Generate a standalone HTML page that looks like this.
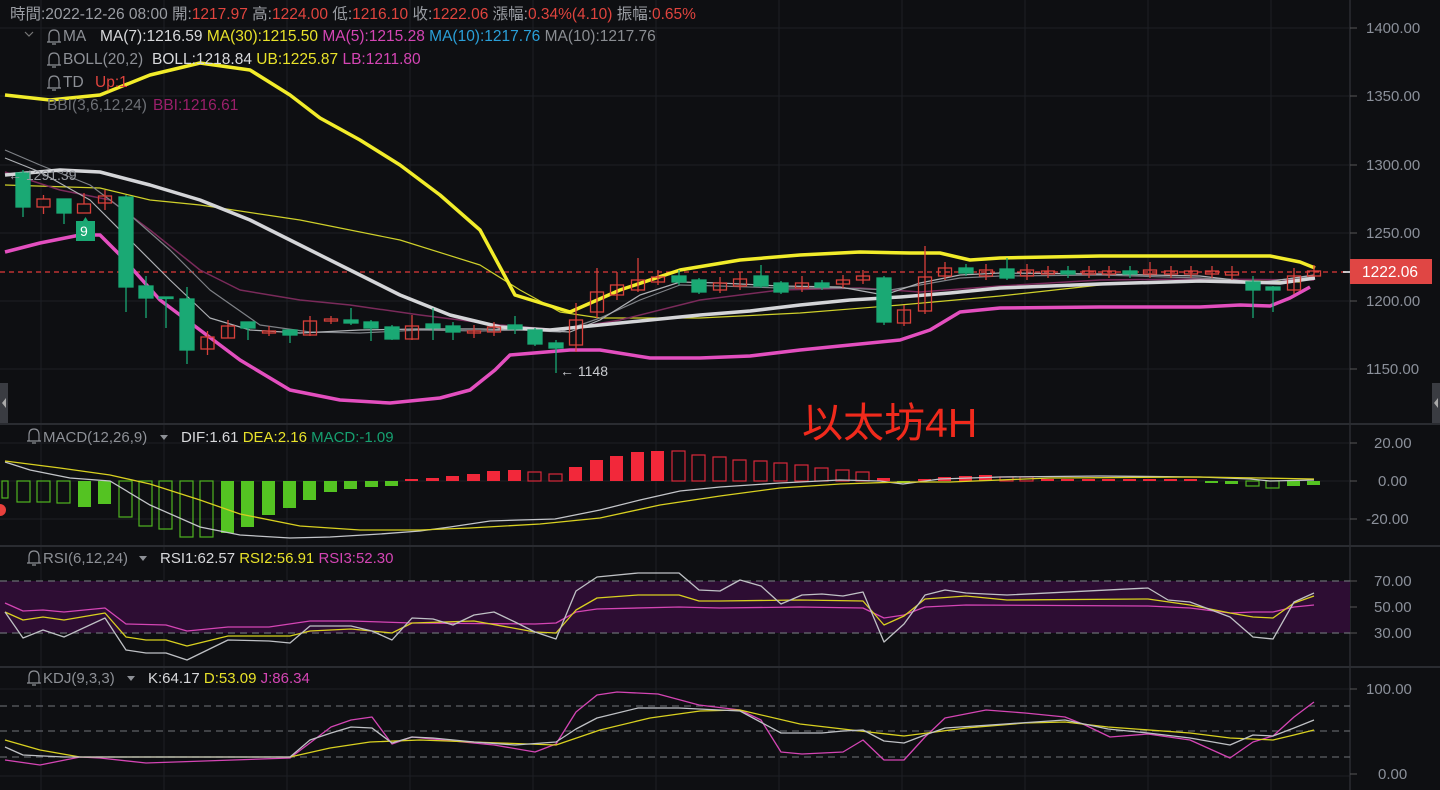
<!DOCTYPE html>
<html><head><meta charset="utf-8">
<style>
html,body{margin:0;padding:0;background:#0e0f12;width:1440px;height:790px;overflow:hidden}
svg{display:block}
text{font-family:"Liberation Sans","Noto Sans CJK TC",sans-serif}
</style></head><body>
<svg width="1440" height="790" viewBox="0 0 1440 790" xmlns="http://www.w3.org/2000/svg">
<rect width="1440" height="790" fill="#0e0f12"/>
<g stroke="#1d1f24" stroke-width="1">
<line x1="41" y1="0" x2="41" y2="790"/><line x1="164" y1="0" x2="164" y2="790"/><line x1="287" y1="0" x2="287" y2="790"/><line x1="410" y1="0" x2="410" y2="790"/><line x1="533" y1="0" x2="533" y2="790"/><line x1="656" y1="0" x2="656" y2="790"/><line x1="779" y1="0" x2="779" y2="790"/><line x1="902" y1="0" x2="902" y2="790"/><line x1="1025" y1="0" x2="1025" y2="790"/><line x1="1148" y1="0" x2="1148" y2="790"/><line x1="1271" y1="0" x2="1271" y2="790"/>
<line x1="0" y1="28" x2="1350" y2="28"/><line x1="0" y1="96" x2="1350" y2="96"/><line x1="0" y1="165" x2="1350" y2="165"/><line x1="0" y1="233" x2="1350" y2="233"/><line x1="0" y1="301" x2="1350" y2="301"/><line x1="0" y1="369" x2="1350" y2="369"/>
<line x1="0" y1="443" x2="1350" y2="443"/><line x1="0" y1="481" x2="1350" y2="481"/><line x1="0" y1="519" x2="1350" y2="519"/>
<line x1="0" y1="689" x2="1350" y2="689"/><line x1="0" y1="776" x2="1350" y2="776"/>
</g>
<g stroke="#2a2c31" stroke-width="2">
<line x1="0" y1="424" x2="1440" y2="424"/><line x1="0" y1="546" x2="1440" y2="546"/><line x1="0" y1="667" x2="1440" y2="667"/>
</g>
<line x1="1350" y1="0" x2="1350" y2="790" stroke="#2a2c31" stroke-width="1.5"/>
<g stroke="#555" stroke-width="1">
<line x1="1350" y1="28" x2="1357" y2="28"/><line x1="1350" y1="96" x2="1357" y2="96"/><line x1="1350" y1="165" x2="1357" y2="165"/><line x1="1350" y1="233" x2="1357" y2="233"/><line x1="1350" y1="301" x2="1357" y2="301"/><line x1="1350" y1="369" x2="1357" y2="369"/>
<line x1="1350" y1="443" x2="1357" y2="443"/><line x1="1350" y1="481" x2="1357" y2="481"/><line x1="1350" y1="519" x2="1357" y2="519"/>
<line x1="1350" y1="581" x2="1357" y2="581"/><line x1="1350" y1="607" x2="1357" y2="607"/><line x1="1350" y1="633" x2="1357" y2="633"/>
<line x1="1350" y1="689" x2="1357" y2="689"/><line x1="1350" y1="774" x2="1357" y2="774"/>
</g>
<g fill="#8b909a" font-size="15">
<text x="1366" y="33">1400.00</text><text x="1366" y="101">1350.00</text><text x="1366" y="170">1300.00</text><text x="1366" y="238">1250.00</text><text x="1366" y="306">1200.00</text><text x="1366" y="374">1150.00</text>
<text x="1374" y="448">20.00</text><text x="1378" y="486">0.00</text><text x="1366" y="524">-20.00</text>
<text x="1374" y="586">70.00</text><text x="1374" y="612">50.00</text><text x="1374" y="638">30.00</text>
<text x="1366" y="694">100.00</text><text x="1378" y="779">0.00</text>
</g>
<rect x="1350" y="259" width="82" height="25" fill="#e04644"/>
<text x="1362" y="277" fill="#fff" font-size="15.5">1222.06</text>
<line x1="0" y1="272" x2="1350" y2="272" stroke="#e0393a" stroke-width="1.2" stroke-dasharray="5,4"/>
<line x1="1343" y1="272" x2="1350" y2="272" stroke="#fff" stroke-width="1.5"/>
<rect x="0" y="383" width="8" height="40" fill="#3a3c42"/><rect x="1432" y="383" width="8" height="40" fill="#3a3c42"/>
<path d="M6 398 L2 403 L6 408Z" fill="#aaa"/><path d="M1438 398 L1434 403 L1438 408Z" fill="#aaa"/>
<circle cx="0" cy="510" r="6" fill="#e8403c"/>

<g fill="none" stroke-linejoin="round">
<polyline stroke="#cfd02a" stroke-width="1.2" points="5,185 100,188 150,200 200,205 300,220 400,240 480,265 520,290 560,312 600,318 700,318 800,313 900,305 1000,296 1100,285 1200,280 1300,282"/>
<polyline stroke="#7a2a5a" stroke-width="1.5" points="5,172 60,190 110,200 150,230 200,270 240,290 300,300 350,305 420,315 500,325 560,330 620,320 700,300 780,290 860,288 920,292 1000,286 1100,280 1200,279 1314,280"/>
<polyline stroke="#7e8186" stroke-width="1.2" points="5,150 40,165 90,185 130,215 170,250 210,290 260,325 310,332 360,333 420,330 480,331 520,330 560,332 600,318 640,300 680,285 720,286 780,288 840,288 890,290 920,285 960,278 1000,276 1100,275 1200,278 1260,282 1314,276"/>
<polyline stroke="#aeb0b4" stroke-width="1.2" points="5,158 40,172 90,200 130,240 170,280 210,318 250,330 300,333 360,330 420,329 480,329 530,330 570,332 600,320 640,295 680,282 720,283 780,286 840,287 884,295 920,283 960,275 1000,273 1100,274 1200,276 1260,283 1314,275"/>
<polyline stroke="#d4d5d8" stroke-width="3.5" points="5,175 60,170 100,172 150,185 200,200 250,220 300,245 350,270 400,295 450,315 500,327 550,330 600,325 650,320 700,315 750,311 800,305 850,300 900,297 950,293 1000,288 1100,284 1200,281 1280,283 1315,278"/>
<polyline stroke="#f2ec2a" stroke-width="3.5" points="5,95 50,100 100,95 150,75 200,63 250,70 290,95 320,118 360,140 400,165 440,195 480,230 515,295 570,312 620,290 680,270 740,260 800,255 860,252 910,253 940,253 970,260 1000,258 1100,256 1270,256 1300,262 1315,268"/>
<polyline stroke="#e34fbf" stroke-width="3.5" points="5,252 40,243 80,235 100,235 120,255 160,300 200,330 240,360 290,390 340,400 390,403 440,398 470,390 495,370 510,355 570,350 600,350 650,358 700,358 750,356 800,350 850,345 900,340 930,330 960,312 1000,308 1100,307 1200,307 1240,305 1270,306 1290,298 1310,287"/>
</g>

<g stroke-width="1.3">
<g stroke="#1aa974" fill="#1aa974">
<line x1="23" y1="170" x2="23" y2="217"/><rect x="16" y="173" width="14" height="34"/>
<line x1="64" y1="199" x2="64" y2="224"/><rect x="57" y="199" width="14" height="14"/>
<line x1="126" y1="195" x2="126" y2="312"/><rect x="119" y="197" width="14" height="90"/>
<line x1="146" y1="276" x2="146" y2="318"/><rect x="139" y="286" width="14" height="12"/>
<line x1="166" y1="297" x2="166" y2="328"/><rect x="159" y="297" width="14" height="1.5"/>
<line x1="187" y1="287" x2="187" y2="364"/><rect x="180" y="299" width="14" height="51"/>
<line x1="248" y1="322" x2="248" y2="340"/><rect x="241" y="322" width="14" height="6"/>
<line x1="290" y1="330" x2="290" y2="343"/><rect x="283" y="330" width="14" height="5"/>
<line x1="351" y1="308" x2="351" y2="325"/><rect x="344" y="320" width="14" height="3"/>
<line x1="371" y1="320" x2="371" y2="341"/><rect x="364" y="322" width="14" height="6"/>
<line x1="392" y1="325" x2="392" y2="340"/><rect x="385" y="327" width="14" height="12"/>
<line x1="433" y1="308" x2="433" y2="340"/><rect x="426" y="324" width="14" height="4"/>
<line x1="453" y1="322" x2="453" y2="340"/><rect x="446" y="326" width="14" height="6"/>
<line x1="515" y1="316" x2="515" y2="334"/><rect x="508" y="325" width="14" height="4"/>
<line x1="535" y1="328" x2="535" y2="346"/><rect x="528" y="330" width="14" height="14"/>
<line x1="556" y1="340" x2="556" y2="373"/><rect x="549" y="343" width="14" height="5"/>
<line x1="679" y1="270" x2="679" y2="285"/><rect x="672" y="276" width="14" height="6"/>
<line x1="699" y1="278" x2="699" y2="294"/><rect x="692" y="280" width="14" height="12"/>
<line x1="761" y1="265" x2="761" y2="288"/><rect x="754" y="276" width="14" height="10"/>
<line x1="781" y1="281" x2="781" y2="294"/><rect x="774" y="283" width="14" height="9"/>
<line x1="822" y1="280" x2="822" y2="290"/><rect x="815" y="283" width="14" height="4"/>
<line x1="884" y1="276" x2="884" y2="325"/><rect x="877" y="278" width="14" height="44"/>
<line x1="966" y1="264" x2="966" y2="276"/><rect x="959" y="268" width="14" height="5"/>
<line x1="1007" y1="258" x2="1007" y2="280"/><rect x="1000" y="269" width="14" height="9"/>
<line x1="1068" y1="266" x2="1068" y2="278"/><rect x="1061" y="271" width="14" height="3"/>
<line x1="1130" y1="266" x2="1130" y2="278"/><rect x="1123" y="271" width="14" height="3"/>
<line x1="1253" y1="276" x2="1253" y2="318"/><rect x="1246" y="282" width="14" height="8"/>
<line x1="1273" y1="286" x2="1273" y2="312"/><rect x="1266" y="287" width="14" height="3"/>
</g>
<g stroke="#d8403a" fill="none">
<line x1="43.5" y1="195" x2="43.5" y2="199"/><line x1="43.5" y1="207" x2="43.5" y2="214"/><rect x="37" y="199" width="13" height="8"/>
<line x1="84" y1="193" x2="84" y2="204"/><rect x="77.5" y="204" width="13" height="9"/>
<line x1="105" y1="190" x2="105" y2="210"/><rect x="98.5" y="196" width="13" height="7"/>
<line x1="207.5" y1="331" x2="207.5" y2="355"/><rect x="201" y="337" width="13" height="12"/>
<line x1="228" y1="320" x2="228" y2="338"/><rect x="221.5" y="326" width="13" height="12"/>
<line x1="269" y1="326" x2="269" y2="336"/><rect x="262.5" y="331" width="13" height="2"/>
<line x1="310" y1="316" x2="310" y2="336"/><rect x="303.5" y="321" width="13" height="14"/>
<line x1="331" y1="316" x2="331" y2="324"/><rect x="324.5" y="319" width="13" height="2"/>
<line x1="412" y1="315" x2="412" y2="340"/><rect x="405.5" y="326" width="13" height="13"/>
<line x1="474" y1="325" x2="474" y2="338"/><rect x="467.5" y="331" width="13" height="2"/>
<line x1="494" y1="322" x2="494" y2="336"/><rect x="487.5" y="327" width="13" height="5"/>
<line x1="576" y1="303" x2="576" y2="352"/><rect x="569.5" y="320" width="13" height="25"/>
<line x1="597" y1="268" x2="597" y2="318"/><rect x="590.5" y="292" width="13" height="20"/>
<line x1="617" y1="272" x2="617" y2="300"/><rect x="610.5" y="285" width="13" height="10"/>
<line x1="638" y1="258" x2="638" y2="292"/><rect x="631.5" y="280" width="13" height="10"/>
<line x1="658" y1="270" x2="658" y2="285"/><rect x="651.5" y="277" width="13" height="5"/>
<line x1="720" y1="277" x2="720" y2="293"/><rect x="713.5" y="283" width="13" height="7"/>
<line x1="740" y1="272" x2="740" y2="290"/><rect x="733.5" y="279" width="13" height="7"/>
<line x1="802" y1="276" x2="802" y2="292"/><rect x="795.5" y="283" width="13" height="5"/>
<line x1="843" y1="275" x2="843" y2="288"/><rect x="836.5" y="280" width="13" height="4"/>
<line x1="863" y1="270" x2="863" y2="284"/><rect x="856.5" y="276" width="13" height="4"/>
<line x1="904" y1="305" x2="904" y2="326"/><rect x="897.5" y="310" width="13" height="13"/>
<line x1="925" y1="246" x2="925" y2="314"/><rect x="918.5" y="277" width="13" height="34"/>
<line x1="945" y1="262" x2="945" y2="280"/><rect x="938.5" y="268" width="13" height="8"/>
<line x1="986" y1="264" x2="986" y2="280"/><rect x="979.5" y="270" width="13" height="6"/>
<line x1="1027" y1="264" x2="1027" y2="280"/><rect x="1020.5" y="270" width="13" height="6"/>
<line x1="1048" y1="266" x2="1048" y2="278"/><rect x="1041.5" y="271" width="13" height="3"/>
<line x1="1089" y1="266" x2="1089" y2="278"/><rect x="1082.5" y="271" width="13" height="3"/>
<line x1="1109" y1="266" x2="1109" y2="278"/><rect x="1102.5" y="271" width="13" height="3"/>
<line x1="1150" y1="262" x2="1150" y2="278"/><rect x="1143.5" y="270" width="13" height="4"/>
<line x1="1171" y1="266" x2="1171" y2="278"/><rect x="1164.5" y="271" width="13" height="3"/>
<line x1="1191" y1="266" x2="1191" y2="278"/><rect x="1184.5" y="271" width="13" height="3"/>
<line x1="1212" y1="266" x2="1212" y2="278"/><rect x="1205.5" y="271" width="13" height="3"/>
<line x1="1232" y1="266" x2="1232" y2="280"/><rect x="1225.5" y="272" width="13" height="3"/>
<line x1="1294" y1="268" x2="1294" y2="294"/><rect x="1287.5" y="276" width="13" height="14"/>
<line x1="1314" y1="265" x2="1314" y2="276"/><rect x="1307.5" y="271" width="13" height="5"/>
</g>
</g>
<rect x="76" y="221" width="19" height="20" fill="#1aa974"/>
<path d="M83 221 L85.5 217 L88 221Z" fill="#1aa974"/>
<text x="80" y="236" fill="#fff" font-size="14">9</text>
<text x="8" y="180" fill="#9a9da3" font-size="14">← 1291.39</text>
<text x="560" y="376" fill="#c9cbcf" font-size="14">← 1148</text>
<text x="802" y="437" fill="#f02a1c" font-size="41" font-family="'Liberation Sans','Noto Sans CJK SC',sans-serif">以太坊4H</text>

<g font-size="15.5">
<text x="10" y="19"><tspan fill="#9a9da3">時間:2022-12-26 08:00 </tspan><tspan fill="#9a9da3">開:</tspan><tspan fill="#e0443e">1217.97 </tspan><tspan fill="#9a9da3">高:</tspan><tspan fill="#e0443e">1224.00 </tspan><tspan fill="#9a9da3">低:</tspan><tspan fill="#e0443e">1216.10 </tspan><tspan fill="#9a9da3">收:</tspan><tspan fill="#e0443e">1222.06 </tspan><tspan fill="#9a9da3">漲幅:</tspan><tspan fill="#e0443e">0.34%(4.10) </tspan><tspan fill="#9a9da3">振幅:</tspan><tspan fill="#e0443e">0.65%</tspan></text>
<path d="M25 32 L29 36 L33 32" stroke="#777" fill="none" stroke-width="1.2"/>
<text x="63" y="41" fill="#8d9096">MA</text>
<text x="100" y="41"><tspan fill="#d8d9dc">MA(7):1216.59 </tspan><tspan fill="#e8e22a">MA(30):1215.50 </tspan><tspan fill="#d445b4">MA(5):1215.28 </tspan><tspan fill="#2a9fd8">MA(10):1217.76 </tspan><tspan fill="#8a8d92">MA(10):1217.76</tspan></text>
<text x="63" y="64" fill="#8d9096">BOLL(20,2)</text>
<text x="152" y="64"><tspan fill="#d8d9dc">BOLL:1218.84 </tspan><tspan fill="#e8e22a">UB:1225.87 </tspan><tspan fill="#d445b4">LB:1211.80</tspan></text>
<text x="63" y="87" fill="#8d9096">TD</text><text x="95" y="87" fill="#e0443e">Up:1</text>
<text x="47" y="110" fill="#6d7076">BBI(3,6,12,24)</text><text x="153" y="110" fill="#9a1f6a">BBI:1216.61</text>
</g>
<g stroke="#8d9096" fill="none" stroke-width="1.2">
<path d="M49 42 L49 36 Q49 30 54 30 Q59 30 59 36 L59 42 Z M47 42 L61 42 M52 44 L56 44"/>
<path d="M49 65 L49 59 Q49 53 54 53 Q59 53 59 59 L59 65 Z M47 65 L61 65 M52 67 L56 67"/>
<path d="M49 88 L49 82 Q49 76 54 76 Q59 76 59 82 L59 88 Z M47 88 L61 88 M52 90 L56 90"/>
<path d="M29 441 L29 435 Q29 429 34 429 Q39 429 39 435 L39 441 Z M27 441 L41 441 M32 443 L36 443"/>
<path d="M29 563 L29 557 Q29 551 34 551 Q39 551 39 557 L39 563 Z M27 563 L41 563 M32 565 L36 565"/>
<path d="M29 683 L29 677 Q29 671 34 671 Q39 671 39 677 L39 683 Z M27 683 L41 683 M32 685 L36 685"/>
</g>

<g font-size="15">
<text x="43" y="442" fill="#8d9096">MACD(12,26,9)</text><path d="M160 435 L168 435 L164 440Z" fill="#8d9096"/>
<text x="181" y="442"><tspan fill="#d8d9dc">DIF:1.61 </tspan><tspan fill="#e8e22a">DEA:2.16 </tspan><tspan fill="#16a070">MACD:-1.09</tspan></text>
</g>
<g fill="#54c322">
<rect x="78" y="481" width="13" height="26"/><rect x="98" y="481" width="13" height="23"/><rect x="221" y="481" width="13" height="52"/><rect x="241" y="481" width="13" height="46"/><rect x="262" y="481" width="13" height="34"/><rect x="283" y="481" width="13" height="27"/><rect x="303" y="481" width="13" height="19"/><rect x="324" y="481" width="13" height="11"/><rect x="344" y="481" width="13" height="8"/><rect x="365" y="481" width="13" height="6"/><rect x="385" y="481" width="13" height="5"/>
<rect x="1205" y="481" width="13" height="2"/><rect x="1225" y="481" width="13" height="3"/><rect x="1287" y="481" width="13" height="5"/><rect x="1307" y="481" width="13" height="4"/>
</g>
<g fill="none" stroke="#4fb51f" stroke-width="1.2">
<rect x="2" y="481" width="6" height="17"/><rect x="17" y="481" width="13" height="21"/><rect x="37" y="481" width="13" height="21"/><rect x="57" y="481" width="13" height="22"/><rect x="119" y="481" width="13" height="36"/><rect x="139" y="481" width="13" height="45"/><rect x="159" y="481" width="13" height="48"/><rect x="180" y="481" width="13" height="56"/><rect x="200" y="481" width="13" height="56"/>
<rect x="1246" y="481" width="13" height="5"/><rect x="1266" y="481" width="13" height="7"/>
</g>
<g fill="#f2283a">
<rect x="405" y="479" width="13" height="2"/><rect x="426" y="478" width="13" height="3"/><rect x="446" y="476" width="13" height="5"/><rect x="467" y="474" width="13" height="7"/><rect x="487" y="471" width="13" height="10"/><rect x="508" y="470" width="13" height="11"/>
<rect x="569" y="467" width="13" height="14"/><rect x="590" y="460" width="13" height="21"/><rect x="610" y="456" width="13" height="25"/><rect x="631" y="452" width="13" height="29"/><rect x="651" y="451" width="13" height="30"/>
<rect x="877" y="478" width="13" height="3"/><rect x="918" y="479" width="13" height="2"/><rect x="938" y="477" width="13" height="4"/><rect x="959" y="476" width="13" height="5"/><rect x="979" y="475" width="13" height="6"/>
<rect x="1041" y="479" width="13" height="2"/><rect x="1061" y="479" width="13" height="2"/><rect x="1082" y="479" width="13" height="2"/><rect x="1102" y="479" width="13" height="2"/><rect x="1123" y="479" width="13" height="2"/><rect x="1143" y="479" width="13" height="2"/><rect x="1164" y="479" width="13" height="2"/><rect x="1184" y="479" width="13" height="2"/>
</g>
<g fill="none" stroke="#d8283a" stroke-width="1.2">
<rect x="528" y="472" width="13" height="9"/><rect x="549" y="474" width="13" height="7"/>
<rect x="672" y="451" width="13" height="30"/><rect x="692" y="455" width="13" height="26"/><rect x="713" y="457" width="13" height="24"/><rect x="733" y="460" width="13" height="21"/><rect x="754" y="461" width="13" height="20"/><rect x="774" y="463" width="13" height="18"/><rect x="795" y="465" width="13" height="16"/><rect x="815" y="468" width="13" height="13"/><rect x="836" y="470" width="13" height="11"/><rect x="856" y="472" width="13" height="9"/>
<rect x="1000" y="477" width="13" height="4"/><rect x="1020" y="477" width="13" height="4"/>
</g>
<rect x="897" y="481" width="13" height="2" fill="#54c322"/>
<g fill="none" stroke-width="1.3">
<polyline stroke="#c3c5c9" points="5,462 30,470 70,478 110,481 150,505 200,527 240,535 290,538 330,537 380,534 420,531 450,527 490,521 520,520 555,519 600,510 640,500 680,491 720,487 780,483 840,480 880,481 903,484 940,479 1000,477 1100,476 1200,477 1250,479 1270,481 1314,480"/>
<polyline stroke="#d8d020" points="5,461 60,468 110,475 150,484 200,500 240,514 300,526 360,530 420,530 470,528 540,524 600,518 660,505 720,496 780,488 840,484 900,482 950,482 1050,478 1200,477 1260,478 1314,479"/>
</g>

<rect x="0" y="581" width="1350" height="52" fill="#2d0d33"/>
<g stroke="#6a6c72" stroke-width="1.3" stroke-dasharray="7,5"><line x1="0" y1="581" x2="1350" y2="581"/><line x1="0" y1="633" x2="1350" y2="633"/></g>
<g font-size="15">
<text x="43" y="563" fill="#8d9096">RSI(6,12,24)</text><path d="M139 556 L147 556 L143 561Z" fill="#8d9096"/>
<text x="160" y="563"><tspan fill="#d8d9dc">RSI1:62.57 </tspan><tspan fill="#e8e22a">RSI2:56.91 </tspan><tspan fill="#d445b4">RSI3:52.30</tspan></text>
</g>
<g fill="none" stroke-width="1.3" stroke-linejoin="round">
<polyline stroke="#d445b4" points="5,603 23,611 43,610 64,612 105,608 126,624 166,625 187,631 228,627 269,627 310,621 351,621 412,623 535,624 556,623 576,612 597,609 679,607 720,608 800,607 863,608 884,618 904,615 925,607 966,605 1148,606 1190,608 1230,613 1253,612 1273,612 1294,607 1314,605"/>
<polyline stroke="#d8d020" points="5,612 23,620 43,617 64,620 105,613 126,637 146,640 166,640 187,646 228,636 290,636 310,631 351,629 392,633 412,623 474,621 535,632 556,633 576,610 597,598 638,595 679,595 699,601 720,601 800,600 863,601 884,625 904,616 925,599 966,596 1007,600 1148,599 1190,605 1230,613 1253,617 1273,618 1294,603 1314,596"/>
<polyline stroke="#bfc1c5" points="5,612 23,638 43,630 64,637 105,618 126,650 146,653 166,653 187,660 228,640 269,641 290,643 310,626 331,626 351,626 372,631 392,640 412,618 433,619 453,625 474,615 494,612 515,622 535,632 556,639 576,591 597,577 638,573 679,573 699,590 720,591 740,580 761,586 781,604 802,595 822,594 843,596 863,592 884,642 904,624 925,595 945,590 966,593 986,594 1007,595 1148,588 1168,600 1190,602 1230,617 1253,637 1273,639 1294,602 1314,593"/>
</g>

<g stroke="#5e6066" stroke-width="1.3" stroke-dasharray="7,5"><line x1="0" y1="706" x2="1350" y2="706"/><line x1="0" y1="731" x2="1350" y2="731"/><line x1="0" y1="757" x2="1350" y2="757"/></g>
<g font-size="15">
<text x="43" y="683" fill="#8d9096">KDJ(9,3,3)</text><path d="M127 676 L135 676 L131 681Z" fill="#8d9096"/>
<text x="148" y="683"><tspan fill="#d8d9dc">K:64.17 </tspan><tspan fill="#e8e22a">D:53.09 </tspan><tspan fill="#d445b4">J:86.34</tspan></text>
</g>
<g fill="none" stroke-width="1.3" stroke-linejoin="round">
<polyline stroke="#d445b4" points="5,760 40,765 80,757 100,758 146,763 290,758 331,727 351,720 372,717 392,744 412,737 453,741 494,745 535,752 556,744 576,712 597,695 617,692 658,694 699,705 740,710 761,720 781,752 802,754 843,752 863,740 884,760 904,760 925,737 945,718 986,710 1025,713 1065,717 1085,725 1110,737 1148,734 1190,740 1230,758 1253,742 1273,736 1294,717 1314,702"/>
<polyline stroke="#d8d020" points="5,740 40,750 80,757 150,757 200,757 290,757 330,748 370,742 420,740 500,743 556,745 600,730 650,718 700,711 740,710 800,724 860,731 904,736 966,728 1025,723 1065,722 1108,727 1190,733 1230,738 1273,740 1294,735 1314,730"/>
<polyline stroke="#bfc1c5" points="5,747 23,755 64,757 105,757 146,757 290,757 310,740 331,733 351,727 372,728 392,743 412,737 433,738 474,742 515,745 556,742 576,729 597,718 638,708 679,708 740,711 781,733 822,733 843,731 863,730 884,741 904,743 925,735 945,728 1005,724 1065,720 1108,729 1148,733 1190,738 1230,745 1253,735 1273,736 1294,728 1314,720"/>
</g>
</svg>
</body></html>
